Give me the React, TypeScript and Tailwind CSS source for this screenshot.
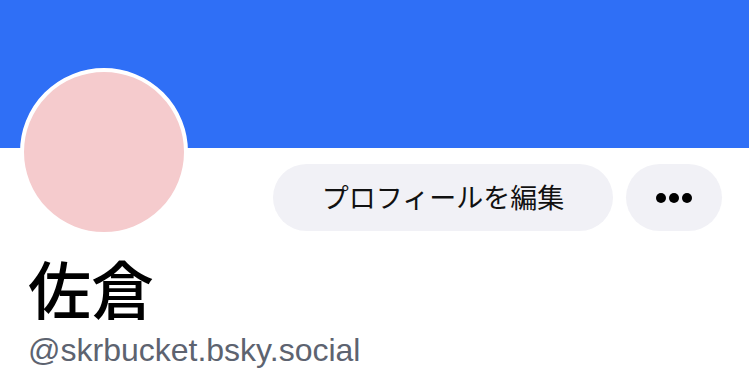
export default function App() {
  return (
    <div className="w-[749px] h-[379px] overflow-hidden bg-white font-['Noto_Sans_CJK_JP',sans-serif]">
      {/* Banner */}
      <div className="h-[148px] bg-[#2f6ff6]" />

      {/* Avatar + actions */}
      <div className="flex items-start justify-between pl-5 pr-[27px]">
        <div className="-mt-[80px] w-[168px] h-[168px] rounded-full border-4 border-white bg-[#f5cbcd]" />
        <div className="mt-4 flex gap-[13px]">
          <button className="w-[340px] h-[67px] rounded-full bg-[#f1f1f6] text-[27px] font-normal text-[#111] font-['Noto_Sans_CJK_JP',sans-serif]">
            プロフィールを編集
          </button>
          <button className="w-[96px] h-[67px] rounded-full bg-[#f1f1f6] flex items-center justify-center gap-[3px]">
            <span className="w-[10px] h-[10px] rounded-full bg-black" />
            <span className="w-[10px] h-[10px] rounded-full bg-black" />
            <span className="w-[10px] h-[10px] rounded-full bg-black" />
          </button>
        </div>
      </div>

      {/* Name + handle */}
      <div className="px-[28px] mt-[13px]">
        <h1 className="text-[63px] leading-[76px] font-medium text-black">佐倉</h1>
        <p className="mt-[7px] text-[32px] leading-[36px] text-[#5d6370] font-['Liberation_Sans',sans-serif]">
          @skrbucket.bsky.social
        </p>
      </div>
    </div>
  );
}
